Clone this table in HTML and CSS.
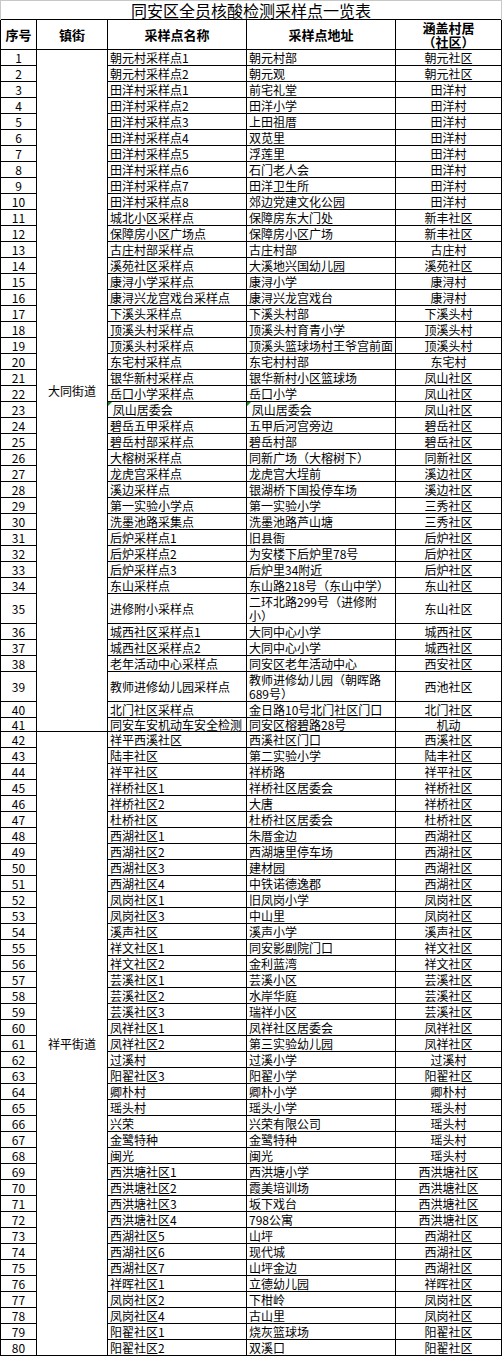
FILE: index.html
```html
<!DOCTYPE html>
<html lang="zh-CN">
<head>
<meta charset="utf-8">
<title>同安区全员核酸检测采样点一览表</title>
<link rel="stylesheet" href="styles.css">
</head>
<body>
<table class="sheet">
  <colgroup>
    <col class="c-no">
    <col class="c-town">
    <col class="c-name">
    <col class="c-addr">
    <col class="c-comm">
  </colgroup>
  <thead>
    <tr class="title-row"><td colspan="5" class="title">同安区全员核酸检测采样点一览表</td></tr>
    <tr class="head-row">
      <th>序号</th><th>镇街</th><th>采样点名称</th><th>采样点地址</th><th>涵盖村居<br>（社区）</th>
    </tr>
  </thead>
  <tbody>
    <tr><td class="no">1</td><td class="town" rowspan="41">大同街道</td><td>朝元村采样点1</td><td>朝元村部</td><td class="comm">朝元社区</td></tr>
    <tr><td class="no">2</td><td>朝元村采样点2</td><td>朝元观</td><td class="comm">朝元社区</td></tr>
    <tr><td class="no">3</td><td>田洋村采样点1</td><td>前宅礼堂</td><td class="comm">田洋村</td></tr>
    <tr><td class="no">4</td><td>田洋村采样点2</td><td>田洋小学</td><td class="comm">田洋村</td></tr>
    <tr><td class="no">5</td><td>田洋村采样点3</td><td>上田祖厝</td><td class="comm">田洋村</td></tr>
    <tr><td class="no">6</td><td>田洋村采样点4</td><td>双苋里</td><td class="comm">田洋村</td></tr>
    <tr><td class="no">7</td><td>田洋村采样点5</td><td>浮莲里</td><td class="comm">田洋村</td></tr>
    <tr><td class="no">8</td><td>田洋村采样点6</td><td>石门老人会</td><td class="comm">田洋村</td></tr>
    <tr><td class="no">9</td><td>田洋村采样点7</td><td>田洋卫生所</td><td class="comm">田洋村</td></tr>
    <tr><td class="no">10</td><td>田洋村采样点8</td><td>郊边党建文化公园</td><td class="comm">田洋村</td></tr>
    <tr><td class="no">11</td><td>城北小区采样点</td><td>保障房东大门处</td><td class="comm">新丰社区</td></tr>
    <tr><td class="no">12</td><td>保障房小区广场点</td><td>保障房小区广场</td><td class="comm">新丰社区</td></tr>
    <tr><td class="no">13</td><td>古庄村部采样点</td><td>古庄村部</td><td class="comm">古庄村</td></tr>
    <tr><td class="no">14</td><td>溪苑社区采样点</td><td>大溪地兴国幼儿园</td><td class="comm">溪苑社区</td></tr>
    <tr><td class="no">15</td><td>康浔小学采样点</td><td>康浔小学</td><td class="comm">康浔村</td></tr>
    <tr><td class="no">16</td><td>康浔兴龙宫戏台采样点</td><td>康浔兴龙宫戏台</td><td class="comm">康浔村</td></tr>
    <tr><td class="no">17</td><td>下溪头采样点</td><td>下溪头村部</td><td class="comm">下溪头村</td></tr>
    <tr><td class="no">18</td><td>顶溪头村采样点</td><td>顶溪头村育青小学</td><td class="comm">顶溪头村</td></tr>
    <tr><td class="no">19</td><td>顶溪头村采样点</td><td>顶溪头篮球场村王爷宫前面</td><td class="comm">顶溪头村</td></tr>
    <tr><td class="no">20</td><td>东宅村采样点</td><td>东宅村村部</td><td class="comm">东宅村</td></tr>
    <tr><td class="no">21</td><td>银华新村采样点</td><td>银华新村小区篮球场</td><td class="comm">凤山社区</td></tr>
    <tr><td class="no">22</td><td>岳口小学采样点</td><td>岳口小学</td><td class="comm">凤山社区</td></tr>
    <tr><td class="no">23</td><td class="flag"> 凤山居委会</td><td class="flag"> 凤山居委会</td><td class="comm">凤山社区</td></tr>
    <tr><td class="no">24</td><td>碧岳五甲采样点</td><td>五甲后河宫旁边</td><td class="comm">碧岳社区</td></tr>
    <tr><td class="no">25</td><td>碧岳村部采样点</td><td>碧岳村部</td><td class="comm">碧岳社区</td></tr>
    <tr><td class="no">26</td><td>大榕树采样点</td><td>同新广场（大榕树下）</td><td class="comm">同新社区</td></tr>
    <tr><td class="no">27</td><td>龙虎宫采样点</td><td>龙虎宫大埕前</td><td class="comm">溪边社区</td></tr>
    <tr><td class="no">28</td><td>溪边采样点</td><td>银湖桥下国投停车场</td><td class="comm">溪边社区</td></tr>
    <tr><td class="no">29</td><td>第一实验小学点</td><td>第一实验小学</td><td class="comm">三秀社区</td></tr>
    <tr><td class="no">30</td><td>洗墨池路采集点</td><td>洗墨池路芦山塘</td><td class="comm">三秀社区</td></tr>
    <tr><td class="no">31</td><td>后炉采样点1</td><td>旧县衙</td><td class="comm">后炉社区</td></tr>
    <tr><td class="no">32</td><td>后炉采样点2</td><td>为安楼下后炉里78号</td><td class="comm">后炉社区</td></tr>
    <tr><td class="no">33</td><td>后炉采样点3</td><td>后炉里34附近</td><td class="comm">后炉社区</td></tr>
    <tr><td class="no">34</td><td>东山采样点</td><td>东山路218号（东山中学）</td><td class="comm">东山社区</td></tr>
    <tr class="tall"><td class="no">35</td><td>进修附小采样点</td><td class="wrap">二环北路299号（进修附<br>小）</td><td class="comm">东山社区</td></tr>
    <tr><td class="no">36</td><td>城西社区采样点1</td><td>大同中心小学</td><td class="comm">城西社区</td></tr>
    <tr><td class="no">37</td><td>城西社区采样点2</td><td>大同中心小学</td><td class="comm">城西社区</td></tr>
    <tr><td class="no">38</td><td>老年活动中心采样点</td><td>同安区老年活动中心</td><td class="comm">西安社区</td></tr>
    <tr class="tall"><td class="no">39</td><td>教师进修幼儿园采样点</td><td class="wrap">教师进修幼儿园（朝晖路<br>689号）</td><td class="comm">西池社区</td></tr>
    <tr><td class="no">40</td><td>北门社区采样点</td><td>金日路10号北门社区门口</td><td class="comm">北门社区</td></tr>
    <tr class="short"><td class="no">41</td><td>同安车安机动车安全检测</td><td>同安区榕碧路28号</td><td class="comm">机动</td></tr>
    <tr><td class="no">42</td><td class="town" rowspan="39">祥平街道</td><td>祥平西溪社区</td><td>西溪社区门口</td><td class="comm">西溪社区</td></tr>
    <tr><td class="no">43</td><td>陆丰社区</td><td>第二实验小学</td><td class="comm">陆丰社区</td></tr>
    <tr><td class="no">44</td><td>祥平社区</td><td>祥桥路</td><td class="comm">祥平社区</td></tr>
    <tr><td class="no">45</td><td>祥桥社区1</td><td>祥桥社区居委会</td><td class="comm">祥桥社区</td></tr>
    <tr><td class="no">46</td><td>祥桥社区2</td><td>大唐</td><td class="comm">祥桥社区</td></tr>
    <tr><td class="no">47</td><td>杜桥社区</td><td>杜桥社区居委会</td><td class="comm">杜桥社区</td></tr>
    <tr><td class="no">48</td><td>西湖社区1</td><td>朱厝金边</td><td class="comm">西湖社区</td></tr>
    <tr><td class="no">49</td><td>西湖社区2</td><td>西湖塘里停车场</td><td class="comm">西湖社区</td></tr>
    <tr><td class="no">50</td><td>西湖社区3</td><td>建材园</td><td class="comm">西湖社区</td></tr>
    <tr><td class="no">51</td><td>西湖社区4</td><td>中铁诺德逸郡</td><td class="comm">西湖社区</td></tr>
    <tr><td class="no">52</td><td>凤岗社区1</td><td>旧凤岗小学</td><td class="comm">凤岗社区</td></tr>
    <tr><td class="no">53</td><td>凤岗社区3</td><td>中山里</td><td class="comm">凤岗社区</td></tr>
    <tr><td class="no">54</td><td>溪声社区</td><td>溪声小学</td><td class="comm">溪声社区</td></tr>
    <tr><td class="no">55</td><td>祥文社区1</td><td>同安影剧院门口</td><td class="comm">祥文社区</td></tr>
    <tr><td class="no">56</td><td>祥文社区2</td><td>金利蓝湾</td><td class="comm">祥文社区</td></tr>
    <tr><td class="no">57</td><td>芸溪社区1</td><td>芸溪小区</td><td class="comm">芸溪社区</td></tr>
    <tr><td class="no">58</td><td>芸溪社区2</td><td>水岸华庭</td><td class="comm">芸溪社区</td></tr>
    <tr><td class="no">59</td><td>芸溪社区3</td><td>瑞祥小区</td><td class="comm">芸溪社区</td></tr>
    <tr><td class="no">60</td><td>凤祥社区1</td><td>凤祥社区居委会</td><td class="comm">凤祥社区</td></tr>
    <tr><td class="no">61</td><td>凤祥社区2</td><td>第三实验幼儿园</td><td class="comm">凤祥社区</td></tr>
    <tr><td class="no">62</td><td>过溪村</td><td>过溪小学</td><td class="comm">过溪村</td></tr>
    <tr><td class="no">63</td><td>阳翟社区3</td><td>阳翟小学</td><td class="comm">阳翟社区</td></tr>
    <tr><td class="no">64</td><td>卿朴村</td><td>卿朴小学</td><td class="comm">卿朴村</td></tr>
    <tr><td class="no">65</td><td>瑶头村</td><td>瑶头小学</td><td class="comm">瑶头村</td></tr>
    <tr><td class="no">66</td><td>兴荣</td><td>兴荣有限公司</td><td class="comm">瑶头村</td></tr>
    <tr><td class="no">67</td><td>金鹭特种</td><td>金鹭特种</td><td class="comm">瑶头村</td></tr>
    <tr><td class="no">68</td><td>闽光</td><td>闽光</td><td class="comm">瑶头村</td></tr>
    <tr><td class="no">69</td><td>西洪塘社区1</td><td>西洪塘小学</td><td class="comm">西洪塘社区</td></tr>
    <tr><td class="no">70</td><td>西洪塘社区2</td><td>霞美培训场</td><td class="comm">西洪塘社区</td></tr>
    <tr><td class="no">71</td><td>西洪塘社区3</td><td>坂下戏台</td><td class="comm">西洪塘社区</td></tr>
    <tr><td class="no">72</td><td>西洪塘社区4</td><td>798公寓</td><td class="comm">西洪塘社区</td></tr>
    <tr><td class="no">73</td><td>西湖社区5</td><td>山坪</td><td class="comm">西湖社区</td></tr>
    <tr><td class="no">74</td><td>西湖社区6</td><td>现代城</td><td class="comm">西湖社区</td></tr>
    <tr><td class="no">75</td><td>西湖社区7</td><td>山坪金边</td><td class="comm">西湖社区</td></tr>
    <tr><td class="no">76</td><td>祥晖社区1</td><td>立德幼儿园</td><td class="comm">祥晖社区</td></tr>
    <tr><td class="no">77</td><td>凤岗社区2</td><td>下柑岭</td><td class="comm">凤岗社区</td></tr>
    <tr><td class="no">78</td><td>凤岗社区4</td><td>古山里</td><td class="comm">凤岗社区</td></tr>
    <tr><td class="no">79</td><td>阳翟社区1</td><td>烧灰篮球场</td><td class="comm">阳翟社区</td></tr>
    <tr><td class="no">80</td><td>阳翟社区2</td><td>双溪口</td><td class="comm">阳翟社区</td></tr>
  </tbody>
</table>
</body>
</html>
```
FILE: styles.css
```css
html, body {
  margin: 0;
  padding: 0;
  background: #ffffff;
}

.sheet {
  border-collapse: collapse;
  table-layout: fixed;
  width: 501px;
  font-family: "Noto Sans CJK SC", "Noto Sans", sans-serif;
  font-size: 12px;
  color: #000;
}

.c-no { width: 36px; }
.c-town { width: 71px; }
.c-name { width: 139px; }
.c-addr { width: 149px; }
.c-comm { width: 106px; }

.sheet td,
.sheet th {
  border: 1px solid #000;
  padding: 0 2px;
  white-space: nowrap;
  overflow: hidden;
  line-height: 14px;
  vertical-align: bottom;
  text-align: left;
  font-weight: normal;
}

.sheet tbody tr {
  height: 16px;
}

.title-row {
  height: 19px;
}

.sheet td.title {
  border: 1px solid #c8c8c8;
  border-bottom: none;
  font-size: 16px;
  line-height: 18px;
  text-align: center;
  vertical-align: bottom;
  padding: 0;
}

.head-row {
  height: 30px;
}

.sheet th {
  font-size: 13px;
  font-weight: bold;
  text-align: center;
  vertical-align: middle;
  line-height: 14px;
  padding: 0;
}

.sheet td.no,
.sheet td.comm {
  text-align: center;
  padding: 0;
}

.sheet td.town {
  text-align: center;
  vertical-align: middle;
  padding: 0;
}

.sheet tbody tr.tall {
  height: 30px;
}

.tall td {
  vertical-align: middle;
}

.sheet td.wrap {
  white-space: normal;
  line-height: 14px;
}

.sheet tbody tr.short {
  height: 14px;
}

.short td {
  line-height: 12px;
}

.sheet td.flag {
  position: relative;
  white-space: pre;
  padding-left: 2px;
}

.sheet td.flag::before {
  content: "";
  position: absolute;
  left: 0;
  top: 0;
  width: 0;
  height: 0;
  border-top: 4px solid #1e8a1e;
  border-right: 4px solid transparent;
}
```
